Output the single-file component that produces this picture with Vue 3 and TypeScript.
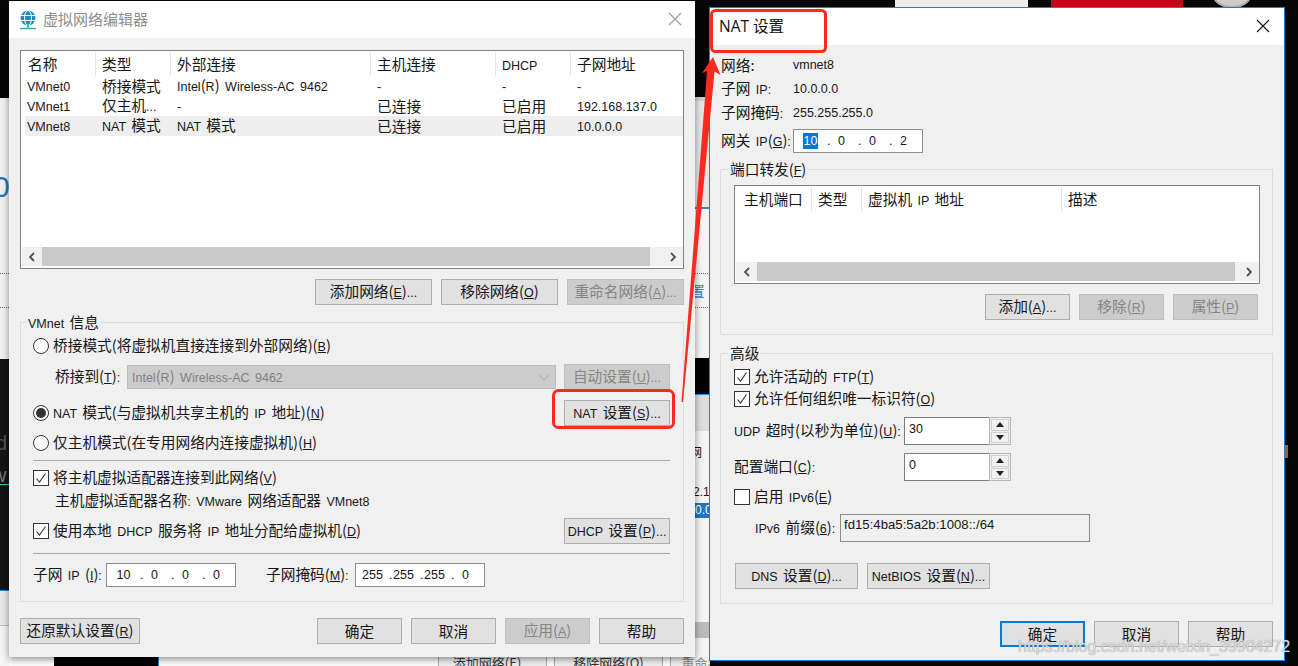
<template>
  <div class="desk">
    <!-- bits of other windows showing behind the dialogs -->
    <div class="back back-left">
      <span class="big-o">0</span>
      <i class="dots d1"></i>
      <i class="dots d2"></i>
    </div>
    <div class="back back-dark"><span class="dk-d">d</span><span class="dk-w">w</span><i class="wave"></i></div>
    <div class="back back-low"></div>
    <div class="back mid-top"><i class="mid-line"></i><span class="mid-glyph">置</span><i class="dots d3"></i><i class="dots d4"></i></div>
    <div class="back mid-black"></div>
    <div class="back mid-gray"></div>
    <div class="back mid-low">
      <span class="mid-net">网</span>
      <span class="mid-num">2.1</span>
      <span class="mid-sel">0.0</span>
      <i class="mid-bar"></i>
    </div>
    <div class="back bottom-band">
      <i class="bb-black"></i>
      <span class="bb-btn b1">添加网络(E)...</span>
      <span class="bb-btn b2">移除网络(O)</span>
      <span class="bb-btn b3">重命名</span>
    </div>
    <i class="back top-white"></i>
    <i class="back top-red"></i>
    <i class="back top-round"></i>
    <i class="back right-orange"></i>

    <!-- 虚拟网络编辑器 -->
    <section class="win win-left">
      <header class="title title-left">
        <svg class="globe" width="18" height="20" viewBox="0 0 18 20">
          <circle cx="9" cy="8" r="7.5" fill="#1b8cc4" />
          <ellipse cx="9" cy="8" rx="3.5" ry="7.5" fill="none" stroke="#fff" stroke-width="1" />
          <path d="M1.5 5.5h15M1.5 10.5h15" stroke="#fff" stroke-width="1" />
          <path d="M9 15.5v2" stroke="#3a9a9a" stroke-width="2" />
          <path d="M1 18.5h16" stroke="#3fae8f" stroke-width="1.5" />
        </svg>
        <span class="title-text">虚拟网络编辑器</span>
        <svg class="close" width="14" height="14" viewBox="0 0 14 14">
          <path d="M1 1l12 12M13 1L1 13" stroke="#9a9a9a" stroke-width="1.1" />
        </svg>
      </header>
      <div class="body body-left">
        <div class="list list-left">
          <div class="list-row list-head cols-left">
            <span v-for="h in netHeads" :key="h" class="cell"><Tx :t="h" /></span>
          </div>
          <div v-for="r in netRows" :key="r[0]" class="list-row cols-left" :class="{ sel: r[0] === 'VMnet8' }">
            <span v-for="(c, i) in r" :key="i" class="cell"><Tx :t="c" /></span>
          </div>
          <div class="hbar hbar-left">
            <svg class="chev" width="6" height="10" viewBox="0 0 6 10"><path d="M5 1L1 5l4 4" /></svg>
            <i class="thumb"></i>
            <svg class="chev chev-r" width="6" height="10" viewBox="0 0 6 10"><path d="M1 1l4 4-4 4" /></svg>
          </div>
        </div>

        <div class="btn-row net-btns">
          <button class="btn w117"><Tx t="添加网络(~E)..." /></button>
          <button class="btn w117"><Tx t="移除网络(~O)" /></button>
          <button class="btn w117 off"><Tx t="重命名网络(~A)..." /></button>
        </div>

        <div class="group group-vm">
          <div class="legend"><Tx t="VMnet 信息" /></div>
          <div class="line l-first"><i class="radio"></i><span><Tx t="桥接模式(将虚拟机直接连接到外部网络)(~B)" /></span></div>
          <div class="line l-bridge">
            <span class="bridge-label"><Tx t="桥接到(~T):" /></span>
            <div class="select">
              <span><Tx t="Intel(R) Wireless-AC 9462" /></span>
              <svg width="12" height="7" viewBox="0 0 12 7"><path d="M1 1l5 5 5-5" fill="none" stroke="#aaa" /></svg>
            </div>
            <button class="btn w106 off"><Tx t="自动设置(~U)..." /></button>
          </div>
          <div class="line l-nat">
            <i class="radio on"></i><span><Tx t="NAT 模式(与虚拟机共享主机的 IP 地址)(~N)" /></span>
            <button class="btn w106 push"><Tx t="NAT 设置(~S)..." /></button>
          </div>
          <div class="line l-host"><i class="radio"></i><span><Tx t="仅主机模式(在专用网络内连接虚拟机)(~H)" /></span></div>
          <div class="sep sep-a"></div>
          <div class="line l-check">
            <i class="check"><svg width="14" height="14" viewBox="0 0 14 14"><path d="M2.5 7.5l3 3.5 6-8.5" /></svg></i>
            <span><Tx t="将主机虚拟适配器连接到此网络(~V)" /></span>
          </div>
          <div class="line l-name"><span><Tx t="主机虚拟适配器名称: VMware 网络适配器 VMnet8" /></span></div>
          <div class="line l-dhcp">
            <i class="check"><svg width="14" height="14" viewBox="0 0 14 14"><path d="M2.5 7.5l3 3.5 6-8.5" /></svg></i>
            <span><Tx t="使用本地 DHCP 服务将 IP 地址分配给虚拟机(~D)" /></span>
            <button class="btn w106 push"><Tx t="DHCP 设置(~P)..." /></button>
          </div>
          <div class="sep sep-b"></div>
          <div class="line l-subnet">
            <span class="lab-ip"><Tx t="子网 IP (~I):" /></span>
            <div class="ip"><template v-for="(o, i) in subnetIp" :key="i"><span v-if="i" class="ip-dot">.</span><span class="octet">{{ o }}</span></template></div>
            <span class="lab-mask"><Tx t="子网掩码(~M):" /></span>
            <div class="ip"><template v-for="(o, i) in subnetMask" :key="i"><span v-if="i" class="ip-dot">.</span><span class="octet">{{ o }}</span></template></div>
          </div>
        </div>

        <div class="btn-row foot-left">
          <button class="btn w120 restore"><Tx t="还原默认设置(~R)" /></button>
          <button class="btn w85">确定</button>
          <button class="btn w85">取消</button>
          <button class="btn w85 off"><Tx t="应用(~A)" /></button>
          <button class="btn w85">帮助</button>
        </div>
      </div>
    </section>

    <!-- NAT 设置 -->
    <section class="win win-nat">
      <header class="title title-nat">
        <span class="nat-title">NAT 设置</span>
        <svg class="close" width="14" height="14" viewBox="0 0 14 14">
          <path d="M1 1l12 12M13 1L1 13" stroke="#111" stroke-width="1.1" />
        </svg>
      </header>
      <div class="body body-nat">
        <div class="info"><span>网络:</span><span class="val">vmnet8</span></div>
        <div class="info"><span><Tx t="子网 IP:" /></span><span class="val">10.0.0.0</span></div>
        <div class="info"><span><Tx t="子网掩码:" /></span><span class="val">255.255.255.0</span></div>
        <div class="gateway">
          <span class="gw-label"><Tx t="网关 IP(~G):" /></span>
          <div class="ip"><template v-for="(o, i) in gatewayIp" :key="i"><span v-if="i" class="ip-dot">.</span><span class="octet"><b v-if="i === 0" class="picked">{{ o }}</b><template v-else>{{ o }}</template></span></template></div>
        </div>

        <div class="group group-port">
          <div class="legend"><Tx t="端口转发(~F)" /></div>
          <div class="list list-port">
            <div class="list-row list-head cols-port">
              <span v-for="h in portHeads" :key="h" class="cell"><Tx :t="h" /></span>
            </div>
            <div class="hbar hbar-port">
              <svg class="chev" width="6" height="10" viewBox="0 0 6 10"><path d="M5 1L1 5l4 4" /></svg>
              <i class="thumb"></i>
              <svg class="chev chev-r" width="6" height="10" viewBox="0 0 6 10"><path d="M1 1l4 4-4 4" /></svg>
            </div>
          </div>
          <div class="btn-row port-btns">
            <button class="btn w85"><Tx t="添加(~A)..." /></button>
            <button class="btn w85 off"><Tx t="移除(~R)" /></button>
            <button class="btn w85 off"><Tx t="属性(~P)" /></button>
          </div>
        </div>

        <div class="group group-adv">
          <div class="legend">高级</div>
          <div class="line a-ftp">
            <i class="check"><svg width="14" height="14" viewBox="0 0 14 14"><path d="M2.5 7.5l3 3.5 6-8.5" /></svg></i>
            <span><Tx t="允许活动的 FTP(~T)" /></span>
          </div>
          <div class="line a-org">
            <i class="check"><svg width="14" height="14" viewBox="0 0 14 14"><path d="M2.5 7.5l3 3.5 6-8.5" /></svg></i>
            <span><Tx t="允许任何组织唯一标识符(~O)" /></span>
          </div>
          <div v-for="s in spinners" :key="s.value" class="line a-spin">
            <span class="spin-label"><Tx :t="s.label" /></span>
            <div class="spin-input">{{ s.value }}</div>
            <div class="spin-btns">
              <i class="spin-up"></i>
              <i class="spin-down"></i>
            </div>
          </div>
          <div class="line a-v6"><i class="check"></i><span><Tx t="启用 IPv6(~E)" /></span></div>
          <div class="line a-prefix">
            <span class="prefix-label"><Tx t="IPv6 前缀(~6):" /></span>
            <div class="prefix">fd15:4ba5:5a2b:1008::/64</div>
          </div>
          <div class="btn-row adv-btns">
            <button class="btn w123"><Tx t="DNS 设置(~D)..." /></button>
            <button class="btn w123"><Tx t="NetBIOS 设置(~N)..." /></button>
          </div>
        </div>

        <div class="btn-row foot-nat">
          <button class="btn w85 primary">确定</button>
          <button class="btn w85">取消</button>
          <button class="btn w85">帮助</button>
        </div>
      </div>
    </section>

    <span class="watermark">https://blog.csdn.net/weixin_39904272</span>

    <!-- red annotation drawn on top of the screenshot -->
    <svg class="marks" width="1298" height="666" viewBox="0 0 1298 666">
      <rect x="711.5" y="10.5" width="114" height="41" rx="4" />
      <rect x="553.5" y="390.5" width="120" height="37" rx="5" />
      <path class="arrow" d="M713 57L720.5 75L714.5 71.5L683 402L681.5 402L707 71L702 73Z" />
    </svg>
  </div>
</template>

<script setup lang="ts">
import { h } from 'vue'

// latin runs are set smaller than the CJK ones, ~X marks the mnemonic letter
const Tx = (props: { t: string }) => {
  const parts = props.t.match(/~.|[\u4e00-\u9fff()]+|[^\u4e00-\u9fff()~]+/g) || []
  return parts.map((p) => {
    if (p[0] === '~') return h('u', { class: 'la' }, p[1])
    if (/[\u4e00-\u9fff()]/.test(p)) return h('span', p)
    return h('span', { class: 'la' }, p)
  })
}
Tx.props = ['t']

const netHeads = ['名称', '类型', '外部连接', '主机连接', 'DHCP', '子网地址']

const netRows: string[][] = [
  ['VMnet0', '桥接模式', 'Intel(R) Wireless-AC 9462', '-', '-', '-'],
  ['VMnet1', '仅主机...', '-', '已连接', '已启用', '192.168.137.0'],
  ['VMnet8', 'NAT 模式', 'NAT 模式', '已连接', '已启用', '10.0.0.0']
]

const portHeads = ['主机端口', '类型', '虚拟机 IP 地址', '描述']

const subnetIp = ['10', '0', '0', '0']
const subnetMask = ['255', '255', '255', '0']
const gatewayIp = ['10', '0', '0', '2']

const spinners = [
  { label: 'UDP 超时(以秒为单位)(~U):', value: '30' },
  { label: '配置端口(~C):', value: '0' }
]
</script>

<style>
html,
body {
  margin: 0;
  background: #000;
}
.la {
  font-family: "Liberation Sans", sans-serif;
  font-size: 12.5px;
  word-spacing: 2px;
}
</style>

<style scoped>
.desk {
  position: relative;
  width: 1298px;
  height: 666px;
  overflow: hidden;
  background: #050505;
  font-family: "Noto Sans CJK SC", sans-serif;
  font-size: 14.7px;
  line-height: 20px;
  color: #161616;
}

/* background */
.back {
  position: absolute;
  display: block;
}
.back-left {
  left: 0;
  top: 98px;
  width: 710px;
  height: 261px;
  background: #f1f1f1;
  overflow: hidden;
}
.big-o {
  position: absolute;
  left: -7px;
  top: 72px;
  font-family: "Liberation Sans", sans-serif;
  font-size: 30px;
  line-height: 34px;
  color: #1a78c8;
}
.dots {
  position: absolute;
  height: 0;
  border-top: 1px dotted #666;
}
.d1 {
  left: 0;
  top: 175px;
  width: 9px;
}
.d2 {
  left: 0;
  top: 209px;
  width: 9px;
}
.back-dark {
  left: 0;
  top: 359px;
  width: 9px;
  height: 231px;
  background: #141414;
  border-bottom: 1px solid #2a86d8;
  overflow: hidden;
  color: #555;
  font-family: "Liberation Sans", sans-serif;
  font-size: 20px;
}
.dk-d {
  position: absolute;
  left: -4px;
  top: 74px;
}
.dk-w {
  position: absolute;
  left: -8px;
  top: 106px;
  color: #777;
}
.wave {
  position: absolute;
  left: 0;
  top: 125px;
  width: 9px;
  height: 1px;
  background: #28c8c8;
}
.back-low {
  left: 0;
  top: 591px;
  width: 9px;
  height: 75px;
  background: linear-gradient(#e8e8e8 0 34px, #bbb 34px 35px, #f4f4f4 35px);
}
.mid-top {
  left: 695px;
  top: 97px;
  width: 15px;
  height: 261px;
  background: linear-gradient(#cfcfcf 0 4px, #e6e6e6 4px 110px, #f4f4f4 110px);
  overflow: hidden;
}
.mid-line {
  position: absolute;
  left: 0;
  top: 110px;
  width: 15px;
  height: 2px;
  background: #2a86d8;
}
.mid-glyph {
  position: absolute;
  left: -5px;
  top: 184px;
  color: #3a7fc8;
}
.d3 {
  left: 0;
  top: 176px;
  width: 15px;
}
.d4 {
  left: 0;
  top: 210px;
  width: 15px;
}
.mid-black {
  left: 695px;
  top: 358px;
  width: 15px;
  height: 36px;
  background: #000;
}
.mid-gray {
  left: 695px;
  top: 394px;
  width: 15px;
  height: 36px;
  background: #ddd;
  border-top: 1px solid #2a86d8;
}
.mid-low {
  left: 695px;
  top: 431px;
  width: 15px;
  height: 227px;
  background: #f4f4f4;
  overflow: hidden;
  font-size: 12px;
}
.mid-net {
  position: absolute;
  left: -5px;
  top: 11px;
}
.mid-num {
  position: absolute;
  left: -2px;
  top: 51px;
  font-family: "Liberation Sans", sans-serif;
}
.mid-sel {
  position: absolute;
  left: 0;
  top: 72px;
  width: 15px;
  height: 15px;
  line-height: 15px;
  background: #1a78c8;
  color: #fff;
  font-family: "Liberation Sans", sans-serif;
}
.mid-bar {
  position: absolute;
  left: 0;
  top: 191px;
  width: 15px;
  height: 16px;
  background: #bbb;
}
.bottom-band {
  left: 9px;
  top: 657px;
  width: 701px;
  height: 9px;
  background: #fbfbfb;
  overflow: hidden;
  font-size: 13px;
  color: #333;
}
.bb-black {
  position: absolute;
  left: 45px;
  top: 0;
  width: 104px;
  height: 9px;
  background: #000;
  border-right: 1px solid #2a86d8;
}
.bb-btn {
  position: absolute;
  top: -5px;
  height: 20px;
  text-align: center;
  border: 1px solid #aaa;
  background: #eee;
}
.b1 {
  left: 429px;
  width: 107px;
}
.b2 {
  left: 545px;
  width: 107px;
}
.b3 {
  left: 661px;
  width: 60px;
  color: #888;
}
.top-white {
  left: 895px;
  top: 0;
  width: 133px;
  height: 7px;
  background: #ededed;
}
.top-red {
  left: 1051px;
  top: 0;
  width: 132px;
  height: 7px;
  background: #bf0a14;
}
.top-round {
  left: 1213px;
  top: -16px;
  width: 34px;
  height: 20px;
  border: 2px solid #aaa;
  border-radius: 50%;
  background: #ccc;
}
.right-orange {
  left: 1285px;
  top: 445px;
  width: 3px;
  height: 13px;
  background: #a8601c;
}

/* windows */
.win {
  position: absolute;
  box-sizing: border-box;
  display: flex;
  flex-direction: column;
  background: #f0f0f0;
}
.win-left {
  left: 9px;
  top: 1px;
  width: 686px;
  height: 656px;
  box-shadow: 0 2px 7px rgba(0, 0, 0, 0.45);
}
.win-nat {
  left: 709px;
  top: 7px;
  width: 576px;
  height: 654px;
  border: 1px solid #1683d8;
}
.title {
  display: flex;
  align-items: center;
  flex: none;
  background: #fff;
}
.title-left {
  height: 37px;
  padding-left: 10px;
}
.title-nat {
  height: 37px;
  padding-left: 9px;
}
.globe {
  margin-top: 1px;
}
.title-text {
  margin: -2px 0 0 6px;
  font-size: 15px;
  color: #8c8c8c;
}
.nat-title {
  margin-top: -2px;
  font-family: "Open Sans", "Noto Sans CJK SC", sans-serif;
  font-size: 15.5px;
  color: #111;
}
.close {
  margin-left: auto;
}
.title-left .close {
  margin-right: 13px;
  margin-top: -2px;
}
.title-nat .close {
  margin-right: 14px;
  margin-top: -1px;
}
.body {
  flex: 1;
  display: flex;
  flex-direction: column;
}
.body-left {
  padding: 12px 11px 0 11px;
}
.body-nat {
  padding: 8px 11px 0 10px;
}

/* list views */
.list {
  box-sizing: border-box;
  display: flex;
  flex-direction: column;
  background: #fff;
  border: 1px solid #7f8389;
}
.list-left {
  height: 219px;
  padding-left: 4px;
}
.list-port {
  width: 526px;
  height: 99px;
  margin: 7px 0 0 13px;
  padding-left: 1px;
}
.list-row {
  display: grid;
  height: 20px;
  align-items: center;
  white-space: nowrap;
}
.list-row .cell {
  padding-left: 7px;
  overflow: hidden;
}
.list-row .cell:first-child {
  padding-left: 2px;
}
.cols-left {
  grid-template-columns: 70px 75px 200px 125px 75px 1fr;
}
.cols-port {
  grid-template-columns: 75px 50px 200px 1fr;
}
.list-head {
  height: 25px;
}
.list-head .cell {
  box-sizing: border-box;
  height: 24px;
  line-height: 24px;
  border-left: 1px solid #e4e4e4;
  padding-left: 6px;
}
.list-head .cell:first-child {
  border-left: 0;
  padding-left: 3px;
}
.cols-port .cell:first-child {
  padding-left: 8px;
}
.sel {
  background: #eeeeee;
}
.hbar {
  display: grid;
  align-items: center;
  height: 19px;
  margin-top: auto;
  margin-bottom: 2px;
  background: #f0f0f0;
}
.hbar-left {
  grid-template-columns: 20px 1fr 33px;
  margin-left: -3px;
}
.hbar-port {
  grid-template-columns: 21px 1fr 24px;
}
.thumb {
  display: block;
  height: 100%;
  background: #c9c9c9;
}
.chev {
  justify-self: center;
  fill: none;
  stroke: #505050;
  stroke-width: 1.8;
}
.chev-r {
  justify-self: end;
  margin-right: 7px;
}

/* buttons */
.btn {
  box-sizing: border-box;
  flex: none;
  height: 26px;
  padding: 0;
  background: #e1e1e1;
  border: 1px solid #adadad;
  font: inherit;
  color: #161616;
  white-space: nowrap;
}
.off {
  background: #cccccc;
  border-color: #bfbfbf;
  color: #858585;
}
.primary {
  border: 2px solid #0a78d4;
}
.w85 {
  width: 85px;
}
.w106 {
  width: 106px;
}
.w117 {
  width: 117px;
}
.w120 {
  width: 120px;
}
.w123 {
  width: 123px;
}
.btn-row {
  display: flex;
  gap: 9px;
}
.net-btns {
  justify-content: flex-end;
  margin-top: 10px;
}
.foot-left {
  margin-top: 16px;
}
.restore {
  margin-right: auto;
}
.port-btns {
  justify-content: flex-end;
  margin: 10px 14px 0 0;
}
.adv-btns {
  margin: 21px 0 0 1px;
}
.foot-nat {
  justify-content: flex-end;
  margin-top: 17px;
}

/* group boxes */
.group {
  box-sizing: border-box;
  border: 1px solid #dcdcdc;
}
.legend {
  width: fit-content;
  height: 18px;
  line-height: 18px;
  margin: -10px 0 0 7px;
  padding: 0 2px;
  background: #f0f0f0;
}
.group-vm {
  height: 280px;
  margin-top: 17px;
  padding: 0 13px 0 12px;
}
.group-vm .legend {
  margin-left: -7px;
}
.group-port {
  height: 166px;
  margin-top: 16px;
}
.group-adv {
  height: 251px;
  margin-top: 18px;
  padding-left: 13px;
}
.group-adv .legend {
  margin-left: -6px;
}
.line {
  display: flex;
  align-items: center;
  height: 20px;
  white-space: nowrap;
}
.l-first {
  margin-top: 5px;
}
.l-bridge {
  height: 26px;
  margin-top: 8px;
  padding-left: 22px;
}
.bridge-label {
  width: 72px;
}
.select {
  box-sizing: border-box;
  display: flex;
  align-items: center;
  justify-content: space-between;
  width: 429px;
  height: 24px;
  margin-right: 8px;
  padding: 0 5px 0 4px;
  background: #cccccc;
  border: 1px solid #bcbcbc;
  color: #808080;
}
.l-nat {
  height: 26px;
  margin-top: 10px;
}
.push {
  margin-left: auto;
}
.l-host {
  margin-top: 7px;
}
.sep {
  height: 1px;
  background: #a9a9a9;
}
.sep-a {
  margin-top: 7px;
}
.l-check {
  margin-top: 7px;
}
.l-name {
  margin-top: 3px;
  padding-left: 22px;
}
.l-dhcp {
  height: 26px;
  margin-top: 7px;
}
.sep-b {
  margin-top: 9px;
}
.l-subnet {
  height: 24px;
  margin-top: 9px;
}
.lab-ip {
  width: 73px;
}
.lab-mask {
  width: 89px;
  margin-left: 30px;
}
.radio {
  box-sizing: border-box;
  flex: none;
  display: flex;
  align-items: center;
  justify-content: center;
  width: 16px;
  height: 16px;
  margin-right: 4px;
  background: #fff;
  border: 1px solid #333;
  border-radius: 50%;
}
.radio.on::after {
  content: "";
  width: 10px;
  height: 10px;
  border-radius: 50%;
  background: #333;
}
.check {
  box-sizing: border-box;
  flex: none;
  width: 16px;
  height: 16px;
  margin-right: 4px;
  background: #fff;
  border: 1px solid #333;
}
.check svg {
  display: block;
  fill: none;
  stroke: #333;
  stroke-width: 1.1;
}

/* ip fields */
.ip {
  box-sizing: border-box;
  display: flex;
  align-items: center;
  width: 130px;
  height: 24px;
  padding-left: 5.5px;
  background: #fff;
  border: 1px solid #8c8c8c;
  font-family: "Liberation Sans", "Noto Sans CJK SC", sans-serif;
  font-size: 12.5px;
}
.octet {
  width: 22px;
  text-align: center;
}
.ip-dot {
  width: 9px;
  text-align: right;
}
.picked {
  display: inline-block;
  width: 15px;
  height: 16px;
  line-height: 16px;
  font-weight: 400;
  background: #0078d7;
  color: #fff;
}

/* NAT dialog */
.info {
  display: grid;
  grid-template-columns: 72px 1fr;
  align-items: center;
  height: 24px;
  padding-left: 1px;
}
.val {
  font-family: "Liberation Sans", sans-serif;
  font-size: 12.5px;
}
.gateway {
  display: flex;
  align-items: center;
  height: 24px;
  margin-top: 4px;
  padding-left: 1px;
}
.gw-label {
  width: 72px;
}
.a-ftp {
  margin-top: 5px;
}
.a-org {
  margin-top: 2px;
}
.a-spin {
  height: 28px;
  margin-top: 8px;
}
.spin-label {
  width: 170px;
}
.spin-input {
  box-sizing: border-box;
  width: 85px;
  height: 28px;
  padding: 0 0 4px 4px;
  line-height: 22px;
  background: #fff;
  border: 1px solid #7d7d7d;
  border-right: 0;
  font-family: "Liberation Sans", sans-serif;
  font-size: 12.5px;
}
.spin-btns {
  box-sizing: border-box;
  display: flex;
  flex-direction: column;
  gap: 1px;
  width: 22px;
  height: 28px;
  padding: 1px;
  border: 1px solid #b4b4b4;
}
.spin-btns i {
  flex: 1;
  display: flex;
  align-items: center;
  justify-content: center;
  background: #f1f1f1;
  border: 1px solid #d0d0d0;
}
.spin-up::after {
  content: "";
  border: 4px solid transparent;
  border-top: 0;
  border-bottom: 5px solid #222;
}
.spin-down::after {
  content: "";
  border: 4px solid transparent;
  border-bottom: 0;
  border-top: 5px solid #222;
}
.a-v6 {
  margin-top: 6px;
}
.a-prefix {
  height: 28px;
  margin-top: 7px;
  padding-left: 21px;
}
.prefix-label {
  width: 85px;
}
.prefix {
  box-sizing: border-box;
  width: 250px;
  height: 28px;
  padding-left: 3px;
  line-height: 20px;
  border: 1px solid #8c8c8c;
  font-family: "Liberation Sans", sans-serif;
  font-size: 13.2px;
}

.watermark {
  position: absolute;
  left: 1018px;
  top: 637px;
  font-family: "Liberation Sans", sans-serif;
  font-size: 16px;
  color: #dcdcdc;
  text-shadow: 0 0 1px #888;
  white-space: nowrap;
}
.marks {
  position: absolute;
  left: 0;
  top: 0;
  pointer-events: none;
}
.marks rect {
  fill: none;
  stroke: #fb2a1f;
  stroke-width: 3;
}
.marks .arrow {
  fill: #fb2a1f;
}
</style>
